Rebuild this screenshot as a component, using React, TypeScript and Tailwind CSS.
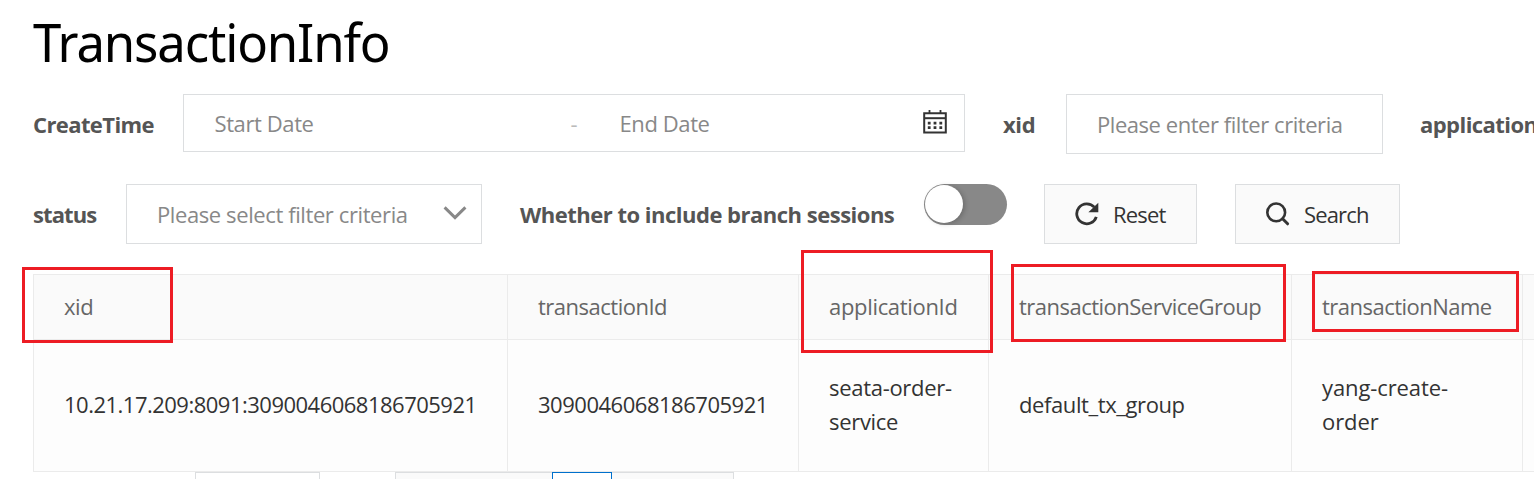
import type { ReactNode } from 'react';

function Label({ children, className }: { children: ReactNode; className: string }) {
  return (
    <label className={`flex h-[60px] shrink-0 items-center font-bold text-[#555] ${className}`}>
      {children}
    </label>
  );
}

function CalendarIcon() {
  return (
    <svg width="24" height="24" viewBox="0 0 24 24" fill="none" stroke="#333" className="mb-[2px] shrink-0">
      <path d="M1.2 3.2h21.6v19.2H1.2z" strokeWidth="2" />
      <path d="M1 8.2h22" strokeWidth="2" />
      <path d="M6.5 0v4M17.5 0v4" strokeWidth="1.8" />
      <path d="M4.8 13.2h2.8M10.6 13.2h2.8M16.4 13.2h2.8M4.8 17.6h2.8M10.6 17.6h2.8M16.4 17.6h2.8" strokeWidth="2.7" />
    </svg>
  );
}

function ChevronIcon() {
  return (
    <svg width="24" height="14" viewBox="0 0 24 14" fill="none" stroke="#888" strokeWidth="3" className="mb-[2px] shrink-0">
      <path d="M1.6 1.4 12 11.6 22.4 1.4" />
    </svg>
  );
}

function ResetIcon() {
  return (
    <svg width="24" height="24" viewBox="0 0 24 24" className="shrink-0">
      <path d="M19.3 5.2A10 10 0 1 0 21.3 14.8" fill="none" stroke="#333" strokeWidth="2.8" />
      <path d="M23.3 .8V10.3H13.4Z" fill="#333" />
    </svg>
  );
}

function SearchIcon() {
  return (
    <svg width="24" height="24" viewBox="0 0 24 24" fill="none" stroke="#333" className="shrink-0">
      <circle cx="10.2" cy="10.4" r="8.9" strokeWidth="2.6" />
      <path d="M16.6 16.8 21.6 21.8" strokeWidth="3" strokeLinecap="round" />
    </svg>
  );
}

const columns = [
  { title: 'xid', value: '10.21.17.209:8091:3090046068186705921', head: '', body: 'tracking-[-0.51px]' },
  { title: 'transactionId', value: '3090046068186705921', head: 'tracking-[-0.5px]', body: 'tracking-[-0.48px]' },
  { title: 'applicationId', value: 'seata-order-service', head: 'tracking-[-0.32px]', body: 'tracking-[-0.3px]' },
  { title: 'transactionServiceGroup', value: 'default_tx_group', head: 'tracking-[-0.51px]', body: '' },
  { title: 'transactionName', value: 'yang-create-order', head: 'tracking-[-0.52px]', body: 'tracking-[-0.1px]' },
  { title: '', value: '', head: '', body: '' },
];

export default function App() {
  return (
    <main className="relative h-[479px] w-full overflow-hidden bg-white pl-[33px] font-['Open_Sans','Noto_Sans',sans-serif] text-[22px] leading-[34px] tracking-[-0.4px] whitespace-nowrap text-[#333]">
      <h1 className="h-[94px] w-fit origin-left scale-x-[.96] pt-[2px] font-['Noto_Sans',sans-serif] text-[53px] leading-[80px] tracking-[-1.2px] text-black">
        TransactionInfo
      </h1>

      <div className="flex h-[90px] items-start text-[#888]">
        <Label className="w-[150px] tracking-[-0.6px]">CreateTime</Label>
        <div className="flex h-[58px] w-[782px] shrink-0 items-center border border-[#dcdee0] pr-[17px] pl-[30.5px]">
          <span className="w-[356px]">Start Date</span>
          <span className="w-[49px] text-[#bbb]">-</span>
          <span className="flex-1">End Date</span>
          <CalendarIcon />
        </div>
        <Label className="ml-[38px] w-[63px]">xid</Label>
        <div className="flex h-[60px] w-[317px] shrink-0 items-center border border-[#dcdee0] pb-px pl-[30px] tracking-[-0.45px]">
          Please enter filter criteria
        </div>
        <Label className="ml-[37px] tracking-[-0.55px]">applicationId</Label>
      </div>

      <div className="flex h-[90px] items-start">
        <Label className="w-[93px] tracking-[-0.9px]">status</Label>
        <div className="flex h-[60px] w-[356px] shrink-0 items-center border border-[#dcdee0] pr-[14px] pl-[30px] text-[#888]">
          <span className="flex-1">Please select filter criteria</span>
          <ChevronIcon />
        </div>
        <Label className="ml-[38px] w-[404px] tracking-[-0.5px]">Whether to include branch sessions</Label>
        <div className="h-[41px] w-[83px] shrink-0 rounded-full bg-[#888] p-px">
          <div className="size-[38px] rounded-full bg-white shadow-[2px_1px_5px_rgba(0,0,0,0.2)]" />
        </div>
        <button className="ml-[37px] flex h-[60px] w-[153px] shrink-0 items-center gap-[14px] border border-[#dcdee0] bg-[#fafafa] pl-[30px] tracking-[-0.8px]">
          <ResetIcon />
          Reset
        </button>
        <button className="ml-[38px] flex h-[60px] w-[165px] shrink-0 items-center gap-[14px] border border-[#dcdee0] bg-[#fafafa] pl-[30px] tracking-[-0.85px]">
          <SearchIcon />
          Search
        </button>
      </div>

      <div className="grid w-[1600px] grid-cols-[474px_291px_190px_303px_231px_1fr] grid-rows-[65px_132px] border-t border-l border-[#ebebeb]">
        {columns.map((c) => (
          <div key={c.title} className={`flex items-center border-r border-b border-[#ebebeb] bg-[#fafafa] pb-[2px] pl-[30px] text-[#666] ${c.head}`}>
            {c.title}
          </div>
        ))}
        {columns.map((c) => (
          <div key={c.title} className={`flex items-center border-r border-b border-[#ebebeb] bg-[#fdfdfd] px-[30px] pb-[3px] whitespace-normal ${c.body}`}>
            {c.value}
          </div>
        ))}
      </div>

      <div className="flex pl-[162px]">
        <div className="h-[60px] w-[125px] border border-[#dcdee0]" />
        <div className="ml-[75px] flex h-[60px] w-[339px] border border-[#dcdee0] bg-[#fafafa] pl-[156px]">
          <div className="-mt-px h-[60px] w-[60px] border border-[#0070cc] bg-white" />
        </div>
      </div>

      <div className="absolute top-[267px] left-[22px] h-[76px] w-[151px] border-3 border-[#ed1c24]" />
      <div className="absolute top-[250px] left-[801px] h-[103px] w-[192px] border-3 border-[#ed1c24]" />
      <div className="absolute top-[264px] left-[1011px] h-[78px] w-[275px] border-3 border-[#ed1c24]" />
      <div className="absolute top-[271px] left-[1312px] h-[61px] w-[207px] border-3 border-[#ed1c24]" />
    </main>
  );
}
